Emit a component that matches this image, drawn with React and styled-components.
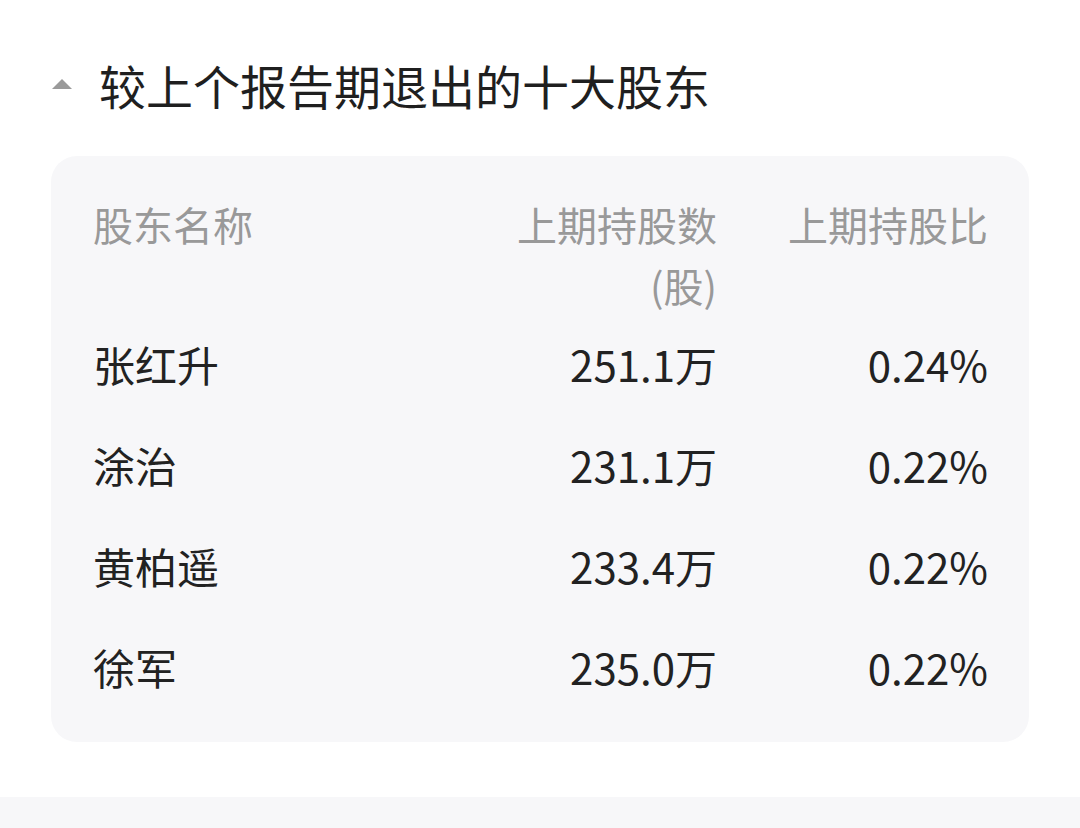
import styled, { createGlobalStyle } from "styled-components";

const GlobalStyle = createGlobalStyle`
  html, body {
    margin: 0;
    padding: 0;
    background: #ffffff;
  }
  body {
    font-family: "Noto Sans CJK SC", "Noto Sans", sans-serif;
    color: #222222;
  }
`;

const rows = [
  { name: "张红升", shares: "251.1万", ratio: "0.24%" },
  { name: "涂治", shares: "231.1万", ratio: "0.22%" },
  { name: "黄柏遥", shares: "233.4万", ratio: "0.22%" },
  { name: "徐军", shares: "235.0万", ratio: "0.22%" },
];

const App = () => {
  return (
    <>
      <GlobalStyle />
      <Page>
        <Section>
          <Title>
            <Caret />
            <h2>较上个报告期退出的十大股东</h2>
          </Title>
          <Card>
            <HeadRow>
              <HeadCell>股东名称</HeadCell>
              <HeadCell $right>上期持股数<br />(股)</HeadCell>
              <HeadCell $right>上期持股比</HeadCell>
            </HeadRow>
            {rows.map((r) => (
              <Row key={r.name}>
                <Cell>{r.name}</Cell>
                <Cell $right>{r.shares}</Cell>
                <Cell $right>{r.ratio}</Cell>
              </Row>
            ))}
          </Card>
        </Section>
        <Footer />
      </Page>
    </>
  );
};

const Page = styled.div`
  width: 1080px;
  height: 828px;
  display: flex;
  flex-direction: column;
  overflow: hidden;
`;

const Section = styled.div`
  padding: 55px 51px 0 51px;
  height: 797px;
  box-sizing: border-box;
`;

const Title = styled.div`
  display: flex;
  align-items: center;
  height: 60px;
  h2 {
    margin: 0 0 0 27px;
    font-size: 47px;
    font-weight: 400;
    line-height: 60px;
    color: #1f1f1f;
  }
`;

const Caret = styled.span`
  width: 0;
  height: 0;
  margin-left: 1px;
  margin-top: -2px;
  border-left: 10px solid transparent;
  border-right: 10px solid transparent;
  border-bottom: 10px solid #9a9a9a;
`;

const Card = styled.div`
  margin-top: 41px;
  background: #f7f7f9;
  border-radius: 26px;
  padding: 40px 41px 22px 42px;
`;

const Grid = styled.div`
  display: grid;
  grid-template-columns: 1fr 200px 271px;
  align-items: center;
`;

const HeadRow = styled(Grid)`
  align-items: start;
`;

const HeadCell = styled.div`
  font-size: 40px;
  line-height: 61px;
  margin-top: -2px;
  color: #999999;
  text-align: ${(p) => (p.$right ? "right" : "left")};
`;

const Row = styled(Grid)`
  height: 101px;
`;

const Cell = styled.div`
  font-size: 42px;
  line-height: 56px;
  margin-top: -6px;
  color: #222222;
  text-align: ${(p) => (p.$right ? "right" : "left")};
`;

const Footer = styled.div`
  flex: 1;
  background: #f7f7f9;
`;

export default App;
